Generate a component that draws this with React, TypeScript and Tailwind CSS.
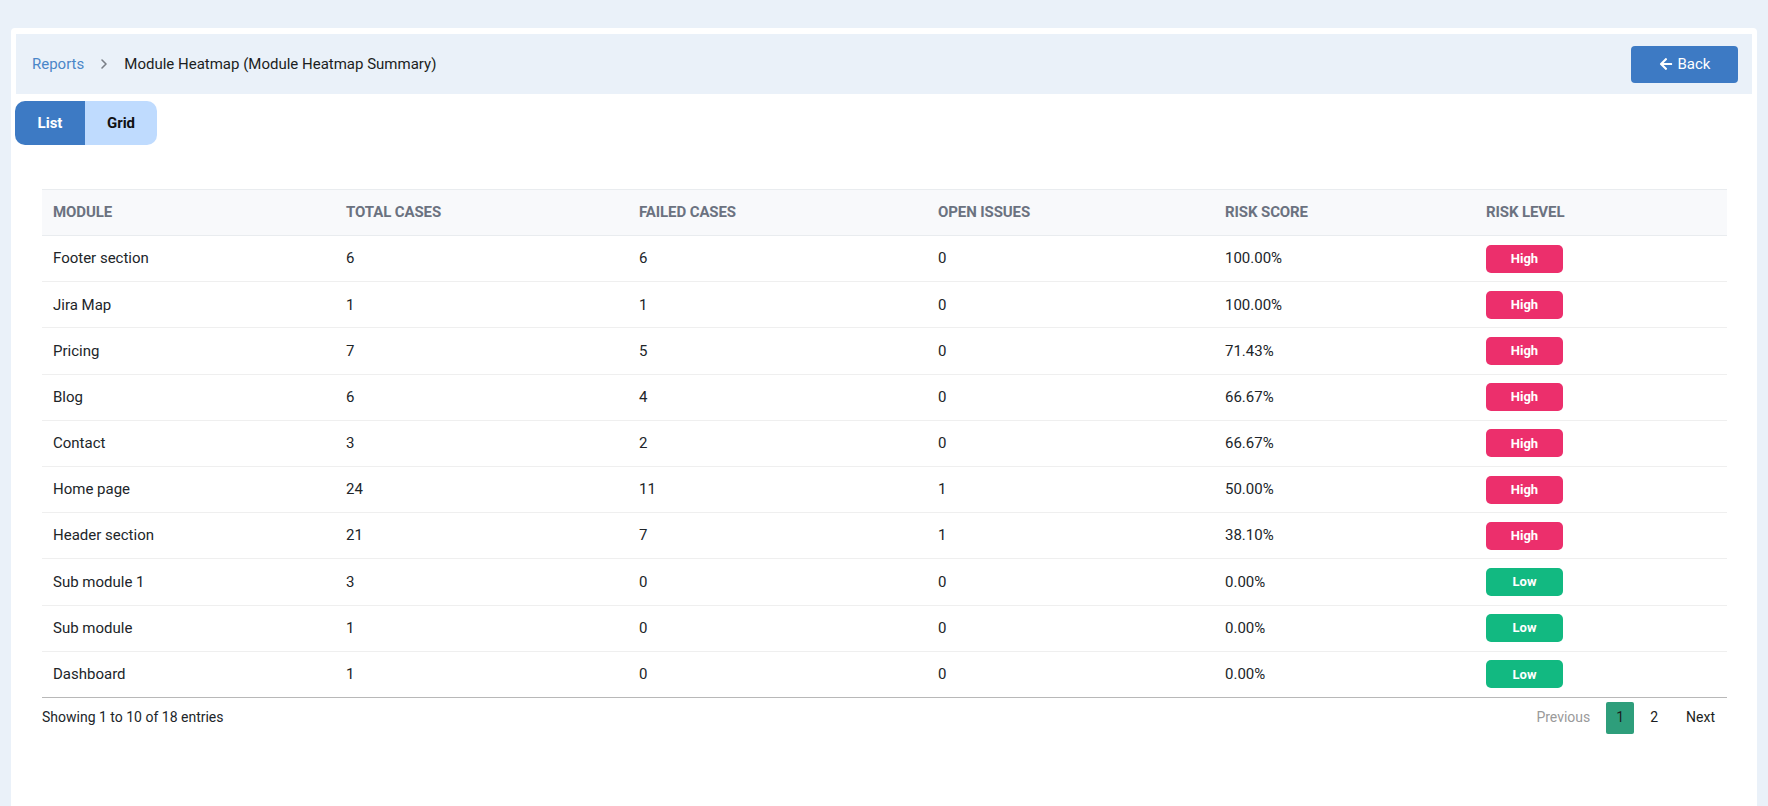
import React from "react";
import { ChevronRight } from "lucide-react";
import { FaArrowLeft } from "react-icons/fa";

type Row = {
  module: string;
  total: number;
  failed: number;
  open: number;
  score: string;
  level: "High" | "Low";
};

const rows: Row[] = [
  { module: "Footer section", total: 6, failed: 6, open: 0, score: "100.00%", level: "High" },
  { module: "Jira Map", total: 1, failed: 1, open: 0, score: "100.00%", level: "High" },
  { module: "Pricing", total: 7, failed: 5, open: 0, score: "71.43%", level: "High" },
  { module: "Blog", total: 6, failed: 4, open: 0, score: "66.67%", level: "High" },
  { module: "Contact", total: 3, failed: 2, open: 0, score: "66.67%", level: "High" },
  { module: "Home page", total: 24, failed: 11, open: 1, score: "50.00%", level: "High" },
  { module: "Header section", total: 21, failed: 7, open: 1, score: "38.10%", level: "High" },
  { module: "Sub module 1", total: 3, failed: 0, open: 0, score: "0.00%", level: "Low" },
  { module: "Sub module", total: 1, failed: 0, open: 0, score: "0.00%", level: "Low" },
  { module: "Dashboard", total: 1, failed: 0, open: 0, score: "0.00%", level: "Low" },
];

const headers = ["MODULE", "TOTAL CASES", "FAILED CASES", "OPEN ISSUES", "RISK SCORE", "RISK LEVEL"];

export default function App() {
  return (
    <div
      className="min-h-screen bg-[#eaf1f9] pt-[28px] px-[11px]"
      style={{ fontFamily: "Roboto, 'Noto Sans', 'Liberation Sans', sans-serif" }}
    >
      <div className="bg-white rounded-t-[4px] h-[778px] px-[5px] pt-[6px]">
        {/* Header band */}
        <div className="bg-[#eaf1f9] h-[60px] flex items-center justify-between pl-[16px] pr-[14px]">
          <div className="flex items-center text-[15px]">
            <span className="text-[#4a86c8]">Reports</span>
            <ChevronRight size={16} strokeWidth={2.4} className="text-[#7a7f87] mx-[12px]" />
            <span className="text-[#1b1e22]">Module Heatmap (Module Heatmap Summary)</span>
          </div>
          <button className="w-[107px] h-[37px] bg-[#3d7ac4] rounded-[4px] text-white text-[15px] flex items-center justify-center gap-[5px]">
            <FaArrowLeft size={14} />
            <span>Back</span>
          </button>
        </div>

        {/* Toggle */}
        <div className="mt-[7px] -ml-[1px] flex">
          <button className="h-[44px] w-[70px] bg-[#3d7ac4] text-white font-bold text-[15px] rounded-l-[10px]">
            List
          </button>
          <button className="h-[44px] w-[72px] bg-[#bfdbfe] text-[#111] font-bold text-[15px] rounded-r-[10px]">
            Grid
          </button>
        </div>

        {/* Table */}
        <div className="mt-[44px] ml-[26px] mr-[25px]">
          <table className="w-full table-fixed border-collapse">
            <colgroup>
              <col className="w-[293px]" />
              <col className="w-[293px]" />
              <col className="w-[299px]" />
              <col className="w-[287px]" />
              <col className="w-[261px]" />
              <col />
            </colgroup>
            <thead>
              <tr className="bg-[#f8f9fb] border-t border-b border-[#e9ecef] h-[46px]">
                {headers.map((h) => (
                  <th
                    key={h}
                    className="text-left pl-[11px] text-[15px] font-bold text-[#6b7280] tracking-[-0.1px]"
                  >
                    {h}
                  </th>
                ))}
              </tr>
            </thead>
            <tbody>
              {rows.map((r, i) => (
                <tr
                  key={r.module}
                  className={
                    "h-[46.2px] border-b " +
                    (i === rows.length - 1 ? "border-[#b8b8b8]" : "border-[#efefef]")
                  }
                >
                  <td className="pl-[11px] text-[15px] text-[#212529]">{r.module}</td>
                  <td className="pl-[11px] text-[15px] text-[#212529]">{r.total}</td>
                  <td className="pl-[11px] text-[15px] text-[#212529]">{r.failed}</td>
                  <td className="pl-[11px] text-[15px] text-[#212529]">{r.open}</td>
                  <td className="pl-[11px] text-[15px] text-[#212529]">{r.score}</td>
                  <td className="pl-[11px]">
                    <span
                      className={
                        "inline-flex items-center justify-center w-[77px] h-[28px] rounded-[5px] text-white text-[13px] font-bold " +
                        (r.level === "High" ? "bg-[#ec2f6c]" : "bg-[#12b981]")
                      }
                    >
                      {r.level}
                    </span>
                  </td>
                </tr>
              ))}
            </tbody>
          </table>

          {/* Footer */}
          <div className="mt-[4px] flex items-center justify-between h-[32px]">
            <span className="text-[14px] text-[#212529]">Showing 1 to 10 of 18 entries</span>
            <div className="flex items-center text-[14px]">
              <span className="px-[10px] h-[32px] flex items-center text-[#9a9a9a]">Previous</span>
              <span className="ml-[6px] px-[10px] h-[32px] flex items-center bg-[#2e9e7b] text-[#1b1e22] rounded-[2px]">
                1
              </span>
              <span className="ml-[6px] px-[10px] h-[32px] flex items-center text-[#1b1e22]">2</span>
              <span className="ml-[6px] px-[12px] h-[32px] flex items-center text-[#1b1e22]">Next</span>
            </div>
          </div>
        </div>
      </div>
    </div>
  );
}
